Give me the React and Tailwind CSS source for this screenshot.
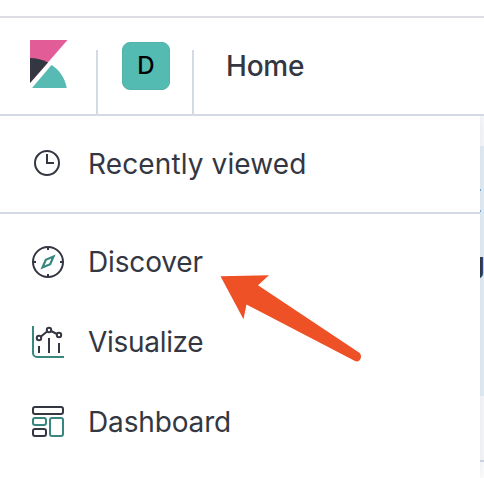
import React from 'react';

const CompassIcon = () => (
  <svg className="h-8 w-8" viewBox="0 0 32 32" fill="none">
    <circle cx="16" cy="16" r="15" stroke="#343741" strokeWidth="2" />
    <path d="M16 1v3M16 28v3M1 16h3M28 16h3" stroke="#343741" strokeWidth="2" />
    <path d="M21.500 10.500 18.200 18.200 10.500 21.500 13.800 13.800Z" stroke="#38877f" strokeWidth="2.200" strokeMiterlimit="10" />
  </svg>
);

const VisualizeIcon = () => (
  <svg className="h-8 w-8" viewBox="0 0 32 32" fill="none" strokeWidth="2">
    <path d="M1 0v27a4 4 0 0 0 4 4h27" stroke="#38877f" />
    <g stroke="#343741">
      <path d="M7 20v7M17 12v15M27 17v10M9 10.5l6-5M19 5l6 3" />
      <circle cx="7" cy="12" r="2.2" />
      <circle cx="17" cy="4" r="2.2" />
      <circle cx="27" cy="9" r="2.2" />
    </g>
  </svg>
);

const DashboardIcon = () => (
  <svg className="h-8 w-8" viewBox="0 0 32 32" fill="none" strokeWidth="2">
    <rect x="1" y="1" width="30" height="7" rx="2" stroke="#343741" />
    <rect x="1" y="12" width="13" height="7" rx="2" stroke="#38877f" />
    <rect x="1" y="23" width="13" height="7" rx="2" stroke="#343741" />
    <rect x="18" y="12" width="13" height="18" rx="2" stroke="#38877f" />
  </svg>
);

const ClockIcon = () => (
  <svg className="h-8 w-8" viewBox="0 0 32 32" fill="none" stroke="#343741" strokeWidth="2">
    <circle cx="15" cy="15" r="12" />
    <path d="M15 6v9h7" />
  </svg>
);

const items = [
  { label: 'Discover', Icon: CompassIcon, tracking: 'tracking-[-0.15px]' },
  { label: 'Visualize', Icon: VisualizeIcon, tracking: 'tracking-[-0.3px]' },
  { label: 'Dashboard', Icon: DashboardIcon, tracking: 'tracking-[-0.15px]' },
];

export default function App() {
  return (
    <div className="relative flex h-[478px] w-[484px] flex-col overflow-hidden bg-white font-['Inter',sans-serif] text-[28px] leading-8 text-[#343741]">
      <header className="relative z-20 mt-4 flex h-[100px] shrink-0 border-y-2 border-t-[#dcdde5] border-b-[#d3dae6] bg-white">
        <div className="flex w-24 pt-[22px] pl-[30px]">
          <svg className="h-12 w-[38px]" viewBox="0 0 38 48">
            <path d="M0 0h37.5L0 43Z" fill="#e25d98" />
            <path d="M0 18c6.500 0 12.500 1.600 18 4.400L0 43Z" fill="#343741" />
            <path d="M21.500 25C29.500 30 35 38 36.700 48H2Z" fill="#57bab3" />
          </svg>
        </div>
        <div className="mt-8 w-0.5 bg-[#d3dae6]" />
        <div className="flex w-[94px] pt-6 pl-6">
          <div className="flex h-12 w-12 items-center justify-center rounded-lg border border-[#50b2a9] bg-[#54bbb3] text-[24px] font-medium text-black">D</div>
        </div>
        <div className="mt-8 w-0.5 bg-[#d3dae6]" />
        <div className="pt-8 pl-8 font-medium tracking-[-0.2px]">Home</div>
      </header>
      <div className="flex min-h-0 flex-1">
        <nav className="z-10 w-[480px] shrink-0 bg-white shadow-[0_0_12px_rgba(65,78,101,0.15)]">
          <div className="flex h-[98px] items-center gap-6 border-b-2 border-[#d3dae6] pl-8">
            <ClockIcon />
            <span className="whitespace-nowrap tracking-[0.12px]">Recently viewed</span>
          </div>
          <div className="pt-2">
            {items.map(({ label, Icon, tracking }) => (
              <div key={label} className="flex h-20 items-center gap-6 pl-8">
                <Icon />
                <span className={tracking}>{label}</span>
              </div>
            ))}
          </div>
        </nav>
        <div className="flex w-1 flex-col overflow-hidden bg-[#fafbfd]">
          <div className="h-[30px] shrink-0" />
          <div className="flex h-[250px] shrink-0 flex-col bg-[#e6f0f8]">
            <div className="mt-[43px] h-0.5 w-px shrink-0 bg-[#79aad9]" />
            <div className="mt-[19px] h-0.5 w-px shrink-0 bg-[#79aad9]" />
            <div className="-ml-[13px] mt-[31px] h-10 text-[28px] leading-10 font-bold">g</div>
          </div>
          <div className="h-16 shrink-0" />
          <div className="h-0.5 shrink-0 bg-[#d3dae6]" />
          <div className="flex-1 bg-white" />
        </div>
      </div>
      <svg className="absolute top-[270px] left-[216px] z-20 h-[100px] w-[150px]" viewBox="216 270 150 100">
        <path d="M220.500 276.300 269 275.300 258 285.300 359 352.500C361.800 354.500 361.600 359 359 360.800 357.800 361.700 356.200 361.600 354.500 360.700L246.500 304.500 243.500 319.300Z" fill="#ee5126" />
      </svg>
    </div>
  );
}
